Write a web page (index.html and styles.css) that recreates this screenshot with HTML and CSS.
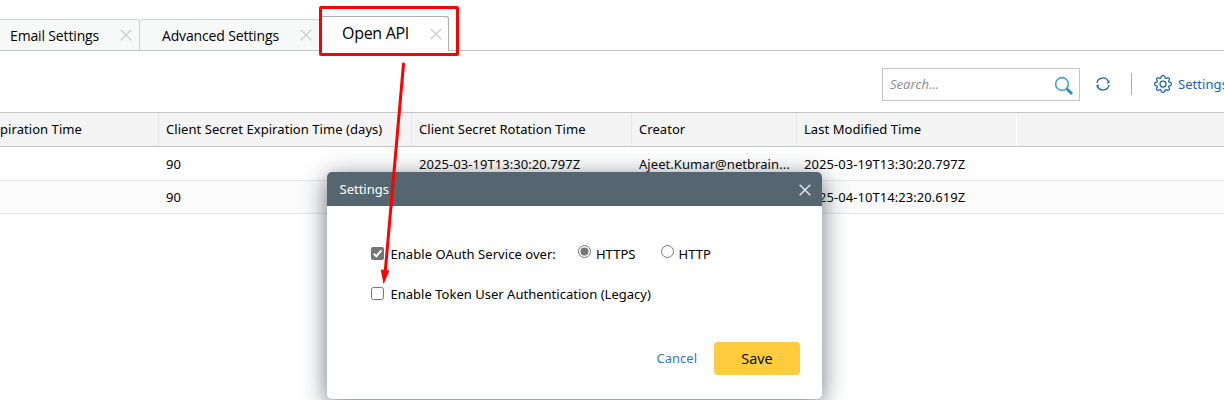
FILE: index.html
```html
<!DOCTYPE html>
<html lang="en">
<head>
<meta charset="utf-8">
<title>Open API</title>
<link rel="stylesheet" href="styles.css">
</head>
<body>
<div class="app">
  <nav class="tabs">
    <div class="tab tab-email"><span class="tab-label">Email Settings</span><svg class="close" viewBox="0 0 12 12"><path d="M.7.7l10.6 10.6M11.3.7L.7 11.3"/></svg></div>
    <div class="tab tab-advanced"><span class="tab-label">Advanced Settings</span><svg class="close" viewBox="0 0 12 12"><path d="M.7.7l10.6 10.6M11.3.7L.7 11.3"/></svg></div>
    <div class="tab tab-active"><span class="tab-label">Open API</span><svg class="close" viewBox="0 0 12 12"><path d="M.7.7l10.6 10.6M11.3.7L.7 11.3"/></svg></div>
  </nav>
  <div class="toolbar">
    <div class="search"><span class="placeholder">Search...</span>
      <svg class="magnifier" viewBox="0 0 20 20"><circle cx="8" cy="8" r="6.4" fill="#f8fcfe" stroke="#4f9fca" stroke-width="1.6"/><path d="M12.8 12.7l5.3 5.2" stroke="#3989bd" stroke-width="2.8"/></svg>
    </div>
    <svg class="refresh" viewBox="0 0 14 14"><path d="M1 5.8A6 6 0 0 1 12.3 4.4M13 8.2A6 6 0 0 1 1.7 9.6" fill="none" stroke="#1768b3" stroke-width="1.3"/><path d="M13.4 3v3.2h-3zM.6 11V7.8h3z" fill="#1768b3"/></svg>
    <span class="divider"></span>
    <svg class="gear" viewBox="0 0 18 18"><path d="M7.3 1.1Q9 .3 10.7 1.1L11.2 3.2Q12 3.8 12.8 3.1 14.2 2.2 15 3.1 15.9 4 15 5.3L14.6 6.2 15.1 7.1 16.8 7.4Q17.8 9 16.8 10.6L15.1 10.9 14.6 11.8 15 12.7Q15.9 14 15 14.9 14.2 15.8 12.8 14.9 12 14.2 11.2 14.8L10.7 16.9Q9 17.7 7.3 16.9L6.8 14.8Q6 14.2 5.2 14.9 3.8 15.8 3 14.9 2.1 14 3 12.7L3.4 11.8 2.9 10.9 1.2 10.6Q.2 9 1.2 7.4L2.9 7.1 3.4 6.2 3 5.3Q2.1 4 3 3.1 3.8 2.2 5.2 3.1 6 3.8 6.8 3.2Z"/><circle cx="9" cy="9" r="3"/></svg>
    <span class="settings-link">Settings</span>
  </div>
  <div class="grid">
    <div class="row head"><div class="cell first">piration Time</div><div class="cell">Client Secret Expiration Time (days)</div><div class="cell">Client Secret Rotation Time</div><div class="cell">Creator</div><div class="cell">Last Modified Time</div><div class="cell"></div></div>
    <div class="row"><div class="cell first"></div><div class="cell">90</div><div class="cell">2025-03-19T13:30:20.797Z</div><div class="cell">Ajeet.Kumar@netbrain...</div><div class="cell">2025-03-19T13:30:20.797Z</div><div class="cell"></div></div>
    <div class="row alt"><div class="cell first"></div><div class="cell">90</div><div class="cell"></div><div class="cell"></div><div class="cell">2025-04-10T14:23:20.619Z</div><div class="cell"></div></div>
  </div>
  <section class="dialog">
    <header class="dialog-head"><span>Settings</span><svg class="dialog-close" viewBox="0 0 12 12"><path d="M.7.7l10.6 10.6M11.3.7L.7 11.3"/></svg></header>
    <div class="dialog-body">
      <div class="option">
        <svg class="box" viewBox="0 0 13 13"><rect width="13" height="13" rx="2" fill="#767676"/><path d="M2.8 6.7l2.5 2.6 5-6" fill="none" stroke="#fff" stroke-width="2"/></svg>
        <span class="option-label">Enable OAuth Service over:</span>
        <svg class="radio" viewBox="0 0 13 13"><circle cx="6.5" cy="6.5" r="6" fill="#fff" stroke="#767676"/><circle cx="6.5" cy="6.5" r="4" fill="#767676"/></svg>
        <span class="option-label https">HTTPS</span>
        <svg class="radio" viewBox="0 0 13 13"><circle cx="6.5" cy="6.5" r="6" fill="#fff" stroke="#767676"/></svg>
        <span class="option-label">HTTP</span>
      </div>
      <div class="option">
        <svg class="box" viewBox="0 0 13 13"><rect x=".5" y=".5" width="12" height="12" rx="2" fill="#fff" stroke="#767676"/></svg>
        <span class="option-label legacy">Enable Token User Authentication (Legacy)</span>
      </div>
    </div>
    <footer class="actions"><span class="cancel">Cancel</span><span class="save">Save</span></footer>
  </section>
  <svg class="annotation" viewBox="0 0 1224 400"><rect x="320.5" y="7.5" width="137" height="47" rx=".5" fill="none" stroke="#fe0000" stroke-width="3"/><path d="M403.5 64L385.2 272" stroke="#fe0000" stroke-width="3" stroke-linecap="round"/><path d="M380.7 269.5l8.8.9-5.9 13.8z" fill="#fe0000"/></svg>
</div>
</body>
</html>
```
FILE: styles.css
```css
* { box-sizing: border-box; }
body { margin: 0; background: #fff; font-family: "Noto Sans", "Open Sans", sans-serif; font-size: 13px; color: #000; }
svg { display: block; flex: none; }
.app { position: relative; width: 1224px; height: 400px; overflow: hidden; }
.tabs { display: flex; align-items: flex-end; height: 51px; border-bottom: 1px solid #c1c4c6; }
.tab { display: flex; align-items: center; justify-content: space-between; height: 31px; border: 1px solid #cfd2d3; border-bottom: 0; border-radius: 3px 3px 0 0; background: #f7f9f9; font-family: "Open Sans", sans-serif; font-size: 14px; letter-spacing: -.15px; white-space: nowrap; }
.tab-email { width: 140px; padding: 0 7px 0 10px; border-left: 0; border-radius: 0 3px 0 0; }
.tab-advanced { width: 180px; padding: 0 7px 0 22px; border-left: 0; }
.tab-active { width: 129px; height: 35px; margin-bottom: -1px; padding: 0 6px 0 21px; border-color: #a9afb4; background: #fff; font-size: 16px; letter-spacing: -.3px; }
.tab-active .tab-label { padding-bottom: 2px; }
.close { width: 12px; height: 12px; fill: none; stroke: #cecece; stroke-width: 1.3; }
.toolbar { display: flex; align-items: center; height: 61px; padding: 6px 0 0 882px; white-space: nowrap; }
.search { display: flex; align-items: center; justify-content: space-between; flex: none; width: 198px; height: 33px; padding: 0 5px 0 7px; border: 1px solid #c3c4c5; }
.placeholder { padding-bottom: 2px; font-style: italic; color: #8b8b8b; font-family: "Open Sans", sans-serif; }
.magnifier { width: 20px; height: 20px; margin-top: 3px; }
.refresh { width: 14px; height: 14px; margin: 0 0 1px 16px; }
.divider { flex: none; width: 1px; height: 22px; margin: 0 22px 1px 21px; background: #aaa; }
.gear { width: 18px; height: 18px; margin-bottom: 1px; fill: none; stroke: #1768b3; stroke-width: 1.25; stroke-linejoin: round; }
.settings-link { padding-bottom: 2px; margin-left: 6px; color: #1565af; letter-spacing: .06px; }
.row { display: grid; grid-template-columns: 159px 253px 220px 165px 220px 207px; height: 33px; border-bottom: 1px solid #e4e5e6; }
.row.head { height: 35px; border-top: 1px solid #c4c4c4; border-bottom-color: #c4c4c4; background: #f4f4f4; }
.row:nth-child(2) { height: 34px; }
.row.alt { background: #fbfbfb; }
.cell { display: flex; align-items: center; padding-left: 7px; white-space: nowrap; letter-spacing: .06px; }
.cell.first { padding-left: 0; }
.head .cell { padding-bottom: 2px; border-right: 1px solid #e5e5e5; }
.head .cell:nth-child(5) { border-color: #fff; }
.head .cell:last-child { border: 0; }
.dialog { position: absolute; left: 327px; top: 172px; width: 495px; height: 227px; border-radius: 5px; background: #fff; box-shadow: 0 5px 25px #33434dbb; }
.dialog-head { display: flex; align-items: center; justify-content: space-between; height: 34px; padding: 0 11px 0 12.5px; border-radius: 5px 5px 0 0; background: #556671; color: #fff; }
.dialog-close { width: 12px; height: 12px; margin-top: 1px; fill: none; stroke: #e0e4e6; stroke-width: 1.5; }
.dialog-body { display: grid; grid-template-rows: 40px 40px; height: 136px; padding: 28px 44px 0; }
.option { display: flex; align-items: center; white-space: nowrap; }
.box { width: 13px; height: 13px; margin-bottom: 2px; }
.option-label { margin-left: 6.5px; letter-spacing: .05px; }
.legacy { letter-spacing: .015px; }
.radio { width: 13px; height: 13px; margin: -5px 0 0 22px; }
.option-label + .radio ~ .option-label { margin-left: 5px; }
.https + .radio { margin-left: 25px; }
.actions { display: flex; align-items: center; justify-content: flex-end; gap: 17px; padding-right: 22px; }
.cancel { padding-bottom: 1px; color: #337ab7; }
.save { display: flex; align-items: center; justify-content: center; width: 86px; height: 33px; border-radius: 4px; background: #ffcb3f; font-family: "Open Sans", sans-serif; font-size: 14.5px; }
.annotation { position: absolute; left: 0; top: 0; width: 1224px; height: 400px; }
```
